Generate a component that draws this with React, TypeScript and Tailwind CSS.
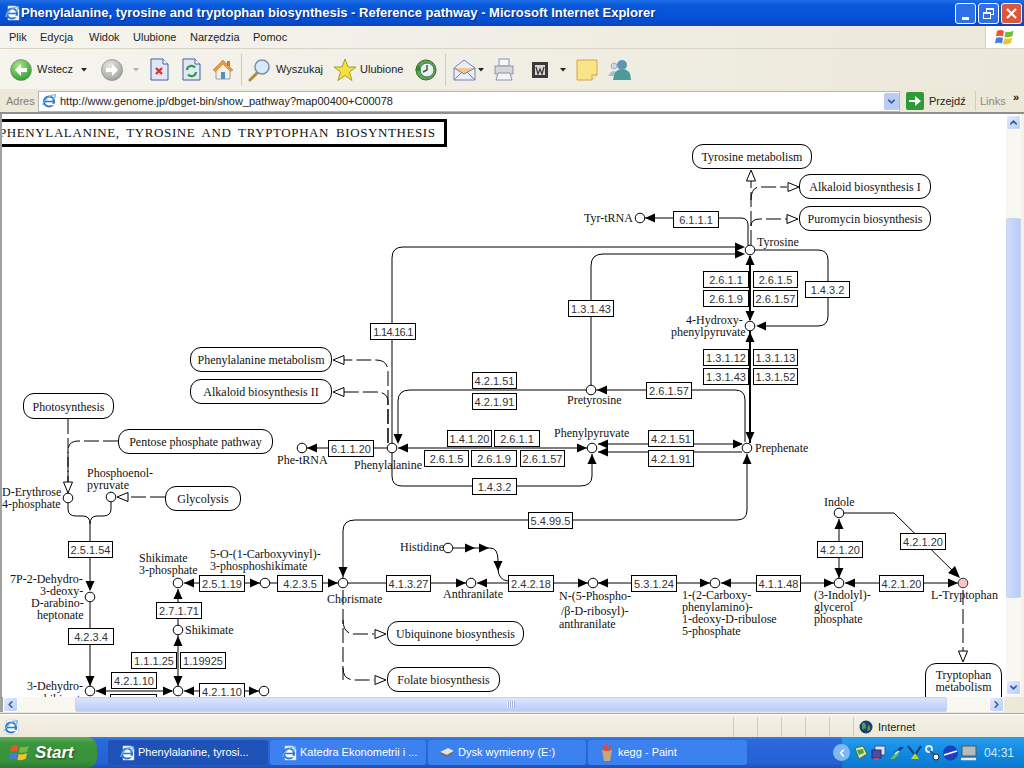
import { ChevronDown, ChevronLeft, ChevronRight, ChevronUp } from "lucide-react";

type Dir = "l" | "r" | "u" | "d";

// everything below is in page coordinates; canvas starts at x=2, y=114
const enzymes: [number, number, number, string][] = [
  [673, 211, 46, "6.1.1.1"],
  [703, 271, 46, "2.6.1.1"],
  [753, 271, 45, "2.6.1.5"],
  [703, 290, 46, "2.6.1.9"],
  [753, 290, 45, "2.6.1.57"],
  [805, 281, 45, "1.4.3.2"],
  [568, 300, 46, "1.3.1.43"],
  [703, 349, 46, "1.3.1.12"],
  [753, 349, 45, "1.3.1.13"],
  [703, 368, 46, "1.3.1.43"],
  [753, 368, 45, "1.3.1.52"],
  [646, 382, 46, "2.6.1.57"],
  [648, 430, 46, "4.2.1.51"],
  [648, 450, 46, "4.2.1.91"],
  [370, 323, 46, "1.14.16.1"],
  [472, 372, 45, "4.2.1.51"],
  [472, 393, 45, "4.2.1.91"],
  [447, 430, 45, "1.4.1.20"],
  [494, 430, 46, "2.6.1.1"],
  [424, 450, 45, "2.6.1.5"],
  [471, 450, 46, "2.6.1.9"],
  [520, 450, 45, "2.6.1.57"],
  [472, 478, 45, "1.4.3.2"],
  [328, 440, 46, "6.1.1.20"],
  [528, 512, 45, "5.4.99.5"],
  [386, 575, 45, "4.1.3.27"],
  [508, 575, 46, "2.4.2.18"],
  [631, 575, 46, "5.3.1.24"],
  [756, 575, 45, "4.1.1.48"],
  [879, 575, 45, "4.2.1.20"],
  [817, 541, 46, "4.2.1.20"],
  [900, 533, 46, "4.2.1.20"],
  [68, 541, 45, "2.5.1.54"],
  [68, 628, 46, "4.2.3.4"],
  [156, 602, 46, "2.7.1.71"],
  [199, 575, 46, "2.5.1.19"],
  [277, 575, 46, "4.2.3.5"],
  [131, 652, 46, "1.1.1.25"],
  [180, 652, 46, "1.19925"],
  [111, 672, 46, "4.2.1.10"],
  [199, 683, 46, "4.2.1.10"],
  [110, 694, 47, ""],
];

const pills: [number, number, number, number, string][] = [
  [692, 144, 120, 25, "Tyrosine metabolism"],
  [799, 174, 132, 25, "Alkaloid biosynthesis I"],
  [799, 206, 132, 25, "Puromycin biosynthesis"],
  [190, 347, 142, 25, "Phenylalanine metabolism"],
  [190, 379, 142, 25, "Alkaloid biosynthesis II"],
  [23, 393, 91, 26, "Photosynthesis"],
  [118, 429, 155, 25, "Pentose phosphate pathway"],
  [165, 486, 76, 25, "Glycolysis"],
  [387, 621, 137, 25, "Ubiquinone biosynthesis"],
  [387, 667, 113, 25, "Folate biosynthesis"],
];

const labels: [number, number, string][] = [
  [584, 218, "Tyr-tRNA"],
  [757, 242, "Tyrosine"],
  [686, 320, "4-Hydroxy-"],
  [671, 332, "phenylpyruvate"],
  [567, 400, "Pretyrosine"],
  [554, 433, "Phenylpyruvate"],
  [755, 448, "Prephenate"],
  [354, 465, "Phenylalanine"],
  [277, 460, "Phe-tRNA"],
  [2, 492, "D-Erythrose"],
  [2, 504, "4-phosphate"],
  [87, 473, "Phosphoenol-"],
  [87, 485, "pyruvate"],
  [10, 579, "7P-2-Dehydro-"],
  [40, 591, "3-deoxy-"],
  [31, 603, "D-arabino-"],
  [37, 615, "heptonate"],
  [27, 686, "3-Dehydro-"],
  [39, 699, "shikimate"],
  [139, 558, "Shikimate"],
  [139, 570, "3-phosphate"],
  [210, 554, "5-O-(1-Carboxyvinyl)-"],
  [210, 566, "3-phosphoshikimate"],
  [185, 630, "Shikimate"],
  [327, 599, "Chorismate"],
  [400, 547, "Histidine"],
  [443, 594, "Anthranilate"],
  [559, 596, "N-(5-Phospho-"],
  [561, 611, "/β-D-ribosyl)-"],
  [559, 624, "anthranilate"],
  [682, 595, "1-(2-Carboxy-"],
  [682, 607, "phenylamino)-"],
  [682, 619, "1-deoxy-D-ribulose"],
  [682, 631, "5-phosphate"],
  [814, 595, "(3-Indolyl)-"],
  [814, 607, "glycerol"],
  [814, 619, "phosphate"],
  [824, 502, "Indole"],
  [931, 595, "L-Tryptophan"],
];

const circles: [number, number][] = [
  [750, 250], [750, 326], [591, 390], [747, 448], [592, 448], [392, 448], [640, 218], [302, 448],
  [68, 498], [111, 497], [90, 597], [90, 691], [178, 583], [265, 583], [343, 583], [178, 630],
  [178, 691], [264, 691], [448, 548], [471, 583], [593, 583], [715, 583], [839, 583], [839, 513],
];

const solid = [
  "M645 218H741Q748 218 748 225V246",
  "M392 444V258Q392 247 403 247H740",
  "M591 386V266Q591 254 603 254H740",
  "M755 250H818Q828 250 828 260V316Q828 326 818 326H760",
  "M596 390H735Q745 390 745 400V442",
  "M598 444H742",
  "M598 452H742",
  "M343 578V531Q343 520 355 520H737Q747 520 747 510V454",
  "M398 448H587",
  "M591 390H410Q398 390 398 401V441",
  "M392 453V476Q392 486 402 486H580Q592 486 592 476V454",
  "M307 448H388",
  "M68 503V509Q68 516 76 516H83Q90 516 90 524V590",
  "M111 502V509Q111 516 103 516H97Q90 516 90 524",
  "M90 602V686",
  "M96 691H172",
  "M178 589V625",
  "M178 635V686",
  "M184 583H260",
  "M270 583H338",
  "M184 691H259",
  "M348 583H466",
  "M477 583H508",
  "M453 548H490Q498 548 498 560V568Q498 580 508 581",
  "M554 583H588",
  "M598 583H710",
  "M721 583H834",
  "M845 583H958",
  "M839 519V578",
  "M844 513H894L958 576",
];

const dashed = [
  "M751 245V180",
  "M751 200Q751 187 760 187H787",
  "M751 226Q751 219 760 219H787",
  "M388 443V372Q388 360 376 360H344",
  "M388 443V402Q388 392 376 392H344",
  "M68 419V482",
  "M118 441H78Q68 441 68 451V482",
  "M165 497H127",
  "M343 590V680",
  "M343 620Q343 634 355 634H374",
  "M343 668Q343 680 355 680H374",
  "M963 590V651",
];

const solidTips: [number, number, Dir][] = [
  [645, 218, "l"], [745, 247, "r"], [745, 254, "r"], [750, 255, "u"], [750, 321, "d"], [756, 326, "l"],
  [750, 332, "u"], [750, 442, "d"], [597, 390, "l"], [598, 444, "l"], [598, 452, "l"], [743, 444, "r"],
  [747, 454, "u"], [343, 577, "d"], [398, 448, "l"], [587, 448, "r"], [398, 444, "d"], [592, 454, "u"],
  [307, 448, "l"], [90, 591, "d"], [90, 686, "d"], [96, 691, "l"], [173, 691, "r"], [178, 636, "u"],
  [178, 686, "d"], [178, 589, "u"], [184, 583, "l"], [260, 583, "r"], [338, 583, "r"], [184, 691, "l"],
  [259, 691, "r"], [466, 583, "r"], [477, 583, "l"], [475, 548, "r"], [489, 548, "r"], [498, 571, "d"],
  [588, 583, "r"], [598, 583, "l"], [710, 583, "r"], [721, 583, "l"], [834, 583, "r"], [845, 583, "l"],
  [958, 583, "r"], [839, 519, "u"], [839, 578, "d"],
];

const openTips: [number, number, Dir][] = [
  [751, 170, "u"], [799, 187, "r"], [798, 219, "r"], [333, 360, "l"], [333, 392, "l"], [68, 493, "d"],
  [117, 497, "l"], [386, 634, "r"], [386, 680, "r"], [963, 662, "d"],
];

function tri(x: number, y: number, d: Dir, len = 10, half = 4.5) {
  if (d === "r") return `${x},${y} ${x - len},${y - half} ${x - len},${y + half}`;
  if (d === "l") return `${x},${y} ${x + len},${y - half} ${x + len},${y + half}`;
  if (d === "u") return `${x},${y} ${x - half},${y + len} ${x + half},${y + len}`;
  return `${x},${y} ${x - half},${y - len} ${x + half},${y - len}`;
}

function Pathway() {
  return (
    <div className="relative w-[1004px] h-[583px] overflow-hidden bg-white">
      <svg width="1004" height="583" viewBox="2 114 1004 583" className="absolute left-0 top-0">
        <g fill="none" stroke="#000" strokeWidth="1">
          {solid.map((d) => (
            <path key={d} d={d} />
          ))}
          <path d="M750 256V320M750 331V443" strokeWidth="2" />
          {dashed.map((d) => (
            <path key={d} d={d} strokeDasharray="15 4" />
          ))}
        </g>
        {solidTips.map(([x, y, d]) => (
          <polygon key={`${x}-${y}-${d}`} points={tri(x, y, d)} fill="#000" />
        ))}
        <polygon points="960,578 948,573 955,566" fill="#000" />
        {openTips.map(([x, y, d]) => (
          <polygon key={`${x}-${y}`} points={tri(x, y, d, 11, 4.5)} fill="#fff" stroke="#000" />
        ))}
        {circles.map(([x, y]) => (
          <circle key={`${x}-${y}`} cx={x} cy={y} r="4.8" fill="#fff" stroke="#000" />
        ))}
        <circle cx="963" cy="583" r="4.8" fill="#f8c4c4" stroke="#333" />
      </svg>

      <div className="absolute left-[-3px] top-[5px] h-[28px] w-[448px] border-[3px] border-black bg-white overflow-hidden">
        <span className="block whitespace-nowrap font-['Liberation_Serif'] text-[13px] leading-[22px] tracking-[0.6px] [word-spacing:3px] text-[#111] ml-[-3px]">
          PHENYLALANINE, TYROSINE AND TRYPTOPHAN BIOSYNTHESIS
        </span>
      </div>

      {pills.map(([x, y, w, h, t]) => (
        <div
          key={t}
          className="absolute flex items-center justify-center rounded-[11px] border border-black bg-white pt-[1px] font-['Liberation_Serif'] text-[12px] text-[#111] whitespace-nowrap"
          style={{ left: x - 2, top: y - 114, width: w, height: h }}
        >
          {t}
        </div>
      ))}
      <div className="absolute left-[923px] top-[549px] w-[77px] h-[46px] rounded-[11px] border border-black bg-white pt-[5px] text-center font-['Liberation_Serif'] text-[12px] leading-[12px] text-[#111]">
        Tryptophan
        <br />
        metabolism
      </div>

      {enzymes.map(([x, y, w, t]) => (
        <div
          key={`${x}-${y}`}
          className={`absolute flex h-[17px] items-center justify-center border border-black bg-white pt-[1px] font-['Liberation_Sans'] text-[11px] text-[#333] whitespace-nowrap ${
            t.length > 8 ? "tracking-[-0.7px]" : ""
          }`}
          style={{ left: x - 2, top: y - 114, width: w }}
        >
          {t}
        </div>
      ))}

      {labels.map(([x, y, t]) => (
        <span
          key={`${x}-${y}`}
          className="absolute whitespace-nowrap font-['Liberation_Serif'] text-[12px] leading-[12px] text-[#111]"
          style={{ left: x - 2, top: y - 114 - 6 }}
        >
          {t}
        </span>
      ))}
    </div>
  );
}

function ScrollBtn({ dir }: { dir: Dir }) {
  const cls = "text-[#3b5a9e]";
  return (
    <div className="flex h-[15px] w-[15px] shrink-0 items-center justify-center rounded-[2px] border border-[#fff] bg-[linear-gradient(135deg,#e3ebfd,#b9ccf6)]">
      {dir === "u" && <ChevronUp size={11} strokeWidth={3.5} className={cls} />}
      {dir === "d" && <ChevronDown size={11} strokeWidth={3.5} className={cls} />}
      {dir === "l" && <ChevronLeft size={11} strokeWidth={3.5} className={cls} />}
      {dir === "r" && <ChevronRight size={11} strokeWidth={3.5} className={cls} />}
    </div>
  );
}

function Caret({ gray }: { gray?: boolean }) {
  return (
    <svg width="6" height="4" viewBox="0 0 6 4" className="shrink-0">
      <path d="M0 0H6L3 3.5Z" fill={gray ? "#b4b4ac" : "#222"} />
    </svg>
  );
}

function Orb({ id, from, to, arrow, left }: { id: string; from: string; to: string; arrow: string; left?: boolean }) {
  return (
    <svg width="22" height="22" viewBox="0 0 22 22" className="shrink-0">
      <defs>
        <radialGradient id={id} cx="40%" cy="30%" r="75%">
          <stop offset="0" stopColor={from} />
          <stop offset="1" stopColor={to} />
        </radialGradient>
      </defs>
      <circle cx="11" cy="11" r="10.5" fill={`url(#${id})`} stroke="#777" strokeWidth="0.6" />
      <path d={left ? "M5 11L11 5V9H17V13H11V17Z" : "M17 11L11 5V9H5V13H11V17Z"} fill={arrow} />
    </svg>
  );
}

function DocIcon({ children }: { children: React.ReactNode }) {
  return (
    <svg width="19" height="23" viewBox="0 0 19 23" className="shrink-0">
      <path d="M1 1H13L18 6V22H1Z" fill="#dfe7f8" stroke="#47609c" />
      <path d="M13 1V6H18" fill="#fff" stroke="#47609c" />
      {children}
    </svg>
  );
}

function IeIcon({ doc }: { doc?: boolean }) {
  return (
    <svg width="16" height="16" viewBox="0 0 16 16" className="shrink-0">
      {doc && <path d="M4 1H12L15 4V15H4Z" fill="#fff" stroke="#b8c4d8" strokeWidth="0.6" />}
      <circle cx="8" cy="8.5" r="5" fill={doc ? "#fff" : "none"} stroke="#2e79c9" strokeWidth="2.2" />
      <path d="M3.5 8.5H12.5" stroke="#2e79c9" strokeWidth="1.6" />
      <path d="M1.5 12C3 7 9 2 14 1.5C15.5 3 13 5 12 6" fill="none" stroke="#6fb2e6" strokeWidth="1.2" />
      <path d="M9 11.5H13" stroke="#fff" strokeWidth="1.4" />
    </svg>
  );
}

function WinFlag({ size = 20 }: { size?: number }) {
  return (
    <svg width={size} height={size} viewBox="0 0 20 20" className="shrink-0">
      <path d="M2 4Q5 2 9 4L8 9.5Q5 8 1 9.5Z" fill="#e8562a" />
      <path d="M10.5 4.5Q14 6 18.5 3.5L17.5 9Q13.5 11 9.5 10Z" fill="#6fbf3c" />
      <path d="M1 11Q4.5 9.5 8 11L7 16.5Q4 15 0 16.5Z" fill="#3c7fe0" />
      <path d="M9.2 11.5Q13 12.5 17.2 10.5L16 16Q12 18 8 17Z" fill="#f4c22c" />
    </svg>
  );
}

function Toolbar() {
  return (
    <div className="flex h-[40px] items-center bg-[linear-gradient(90deg,#f5f4ee,#ece8da)] pl-[10px] pt-[1px] font-['Liberation_Sans'] text-[11px] text-[#222] whitespace-nowrap">
      <Orb id="back" from="#a8e88a" to="#2d9a2a" arrow="#fff" left />
      <span className="ml-[5px] w-[34px]">Wstecz</span>
      <span className="ml-[10px]"><Caret /></span>
      <span className="ml-[14px]"><Orb id="fwd" from="#e8e8e2" to="#a0a09a" arrow="#fff" /></span>
      <span className="ml-[10px]"><Caret gray /></span>
      <span className="ml-[11px]">
        <DocIcon>
          <path d="M6 10L12 16M12 10L6 16" stroke="#d8342a" strokeWidth="2.4" />
        </DocIcon>
      </span>
      <span className="ml-[13px]">
        <DocIcon>
          <path d="M5 12A4.5 4.5 0 0 1 13 9.5M14 14A4.5 4.5 0 0 1 6 16.5" fill="none" stroke="#2f9e3a" strokeWidth="2.2" />
        </DocIcon>
      </span>
      <svg width="22" height="23" viewBox="0 0 22 23" className="ml-[11px] shrink-0">
        <path d="M4 11V21H18V11L11 4Z" fill="#f3f1e6" stroke="#9aa0a8" />
        <path d="M1 12L11 2L21 12L18.5 13.5L11 6L3.5 13.5Z" fill="#ec9a3c" stroke="#b86c20" strokeWidth="0.5" />
        <rect x="9" y="14" width="4" height="7" fill="#4f8fc8" />
        <rect x="15" y="3" width="3" height="5" fill="#c77b3a" />
      </svg>
      <div className="ml-[7px] h-[32px] w-[1px] bg-[#cfccbc]" />
      <svg width="23" height="24" viewBox="0 0 23 24" className="ml-[6px] shrink-0">
        <path d="M10 14L2 22" stroke="#b8863a" strokeWidth="3" strokeLinecap="round" />
        <circle cx="14" cy="9" r="7" fill="#d8eaf8" stroke="#7a94ac" strokeWidth="1.6" />
      </svg>
      <span className="ml-[5px] w-[45px]">Wyszukaj</span>
      <svg width="24" height="24" viewBox="0 0 24 24" className="ml-[12px] shrink-0">
        <path d="M12 1L15 9H23L16.5 14L19 22.5L12 17.5L5 22.5L7.5 14L1 9H9Z" fill="#f6df3c" stroke="#a89a30" />
      </svg>
      <span className="ml-[3px] w-[41px]">Ulubione</span>
      <svg width="24" height="24" viewBox="0 0 24 24" className="ml-[13px] shrink-0">
        <circle cx="12" cy="12" r="10" fill="#5fa845" stroke="#38682c" />
        <circle cx="13" cy="12" r="7" fill="#e8f0f4" stroke="#4a6a8a" />
        <path d="M13 7V12L9 14" fill="none" stroke="#2f5e2a" strokeWidth="1.4" />
        <path d="M1 12L5 7L7 13Z" fill="#2f8a2a" />
      </svg>
      <div className="ml-[7px] h-[32px] w-[1px] bg-[#cfccbc]" />
      <svg width="23" height="22" viewBox="0 0 23 22" className="ml-[7px] shrink-0">
        <path d="M1 9L11 1L22 9V21H1Z" fill="#e9eef8" stroke="#6c86b4" />
        <path d="M1 9L11 15L22 9" fill="#f4c88a" stroke="#6c86b4" />
        <path d="M1 21L9 13M22 21L14 13" stroke="#6c86b4" />
      </svg>
      <span className="ml-[2px]"><Caret /></span>
      <svg width="22" height="23" viewBox="0 0 22 23" className="ml-[9px] shrink-0">
        <path d="M6 1H16V8H6Z" fill="#f4f6fa" stroke="#8c94a4" />
        <path d="M2 8H20V16H2Z" fill="#d4d6dc" stroke="#8c94a4" />
        <path d="M5 15H17L19 22H3Z" fill="#f4f4f4" stroke="#8c94a4" />
      </svg>
      <svg width="16" height="16" viewBox="0 0 16 16" className="ml-[17px] shrink-0">
        <rect width="16" height="16" fill="#3a3a3a" />
        <rect x="3" y="3" width="10" height="10" fill="#d8d8d0" />
        <path d="M4 5L6 12L8 7L10 12L12 5" fill="none" stroke="#333" strokeWidth="1.2" />
      </svg>
      <span className="ml-[12px]"><Caret /></span>
      <svg width="22" height="22" viewBox="0 0 22 22" className="ml-[10px] shrink-0">
        <path d="M1 1H21V16L16 21H1Z" fill="#fbe38a" stroke="#d0a83c" />
        <path d="M16 21V16H21" fill="#f5eeb8" stroke="#d0a83c" />
      </svg>
      <svg width="25" height="23" viewBox="0 0 25 23" className="ml-[9px] shrink-0">
        <circle cx="7" cy="8" r="3" fill="#c8d8e8" stroke="#7a94ac" strokeWidth="0.6" />
        <path d="M1 18Q7 8 12 18Z" fill="#a8c0d4" />
        <circle cx="15" cy="7" r="5" fill="#5f95b0" />
        <path d="M6 22Q7 11 15 11Q24 11 24 22Z" fill="#4e9a98" />
      </svg>
    </div>
  );
}

function AddressBar() {
  return (
    <div className="flex h-[25px] items-center border-b-2 border-[#8f8f8a] bg-[#ece9d8] pt-[1px] font-['Liberation_Sans'] text-[11px] whitespace-nowrap">
      <span className="ml-[6px] w-[32px] text-[#7f7f78]">Adres</span>
      <div className="flex h-[21px] w-[862px] items-center border border-[#aeb8c8] bg-white">
        <span className="ml-[2px]"><IeIcon /></span>
        <span className="ml-[3px] text-[11px] text-[#222]">http://www.genome.jp/dbget-bin/show_pathway?map00400+C00078</span>
        <div className="ml-auto flex h-[17px] w-[15px] items-center justify-center rounded-[2px] bg-[#b9ccf4]">
          <ChevronDown size={11} strokeWidth={3.5} className="text-[#3b5a9e]" />
        </div>
      </div>
      <svg width="18" height="18" viewBox="0 0 18 18" className="ml-[6px] shrink-0">
        <rect width="18" height="18" rx="2" fill="#2f9a38" />
        <path d="M3 8H9V4L15 9L9 14V10H3Z" fill="#fff" />
      </svg>
      <span className="ml-[5px] w-[36px] text-[#222]">Przejdź</span>
      <div className="ml-[10px] h-[20px] w-[1px] bg-[#cfccbc]" />
      <span className="ml-[4px] w-[25px] text-[#8a8a84]">Links</span>
      <span className="ml-[8px] mt-[-8px] font-bold text-[11px] text-[#111]">»</span>
    </div>
  );
}

function TaskButton({ label, w, active, children }: { label: string; w: string; active?: boolean; children: React.ReactNode }) {
  return (
    <div
      className={`flex h-[25px] items-center rounded-[3px] pl-[11px] text-[11px] text-white whitespace-nowrap ${w} ${
        active ? "bg-[#1e52b7]" : "bg-[#3c81f0]"
      }`}
    >
      {children}
      <span className="ml-[3px]">{label}</span>
    </div>
  );
}

function TrayIcons() {
  return (
    <div className="ml-[1px] flex items-center gap-[1px]">
      <svg width="17" height="16" viewBox="0 0 17 16">
        <path d="M3 3L11 1L15 9L7 14Z" fill="#e8dfa0" stroke="#2d7a3a" />
        <path d="M5 5L11 4L12 8L7 10Z" fill="#4aa050" />
      </svg>
      <svg width="17" height="16" viewBox="0 0 17 16">
        <rect x="5" y="1" width="10" height="9" fill="#dfe4f4" stroke="#3f4f8f" />
        <rect x="2" y="5" width="9" height="8" fill="#4a4fa0" stroke="#2a2f70" />
        <path d="M4 14H9" stroke="#c04a7a" strokeWidth="2" />
      </svg>
      <svg width="17" height="16" viewBox="0 0 17 16">
        <path d="M2 14L7 9H11L6 14Z" fill="#6fc04a" />
        <path d="M6 8L12 2H16L10 8Z" fill="#1c3f8f" />
        <path d="M7 9L11 6" stroke="#cfe0f4" strokeWidth="2" />
      </svg>
      <svg width="17" height="16" viewBox="0 0 17 16">
        <path d="M2 1L9 10L15 1" fill="none" stroke="#1a3f6a" strokeWidth="2" />
        <path d="M5 14L13 14L9 8Z" fill="#b4d63a" />
      </svg>
      <svg width="17" height="16" viewBox="0 0 17 16">
        <circle cx="5" cy="4" r="3" fill="none" stroke="#d8ecf8" strokeWidth="2" />
        <path d="M6 6L12 11" stroke="#2a4f8a" strokeWidth="2" />
        <circle cx="12" cy="12" r="3" fill="#f0f4f8" stroke="#223" />
      </svg>
      <svg width="17" height="16" viewBox="0 0 17 16">
        <circle cx="8.5" cy="8" r="7.5" fill="#1c3fc0" />
        <path d="M2 10L15 6" stroke="#fff" strokeWidth="1.6" />
      </svg>
      <svg width="17" height="16" viewBox="0 0 17 16">
        <rect x="2" y="1" width="14" height="10" fill="#b4bcc0" stroke="#555" />
        <path d="M1 14H16" stroke="#e4e8ea" strokeWidth="2.5" />
      </svg>
    </div>
  );
}

export default function App() {
  return (
    <div className="flex h-[768px] w-[1024px] flex-col overflow-hidden bg-[#ece9d8] font-['Liberation_Sans']">
      <div className="flex h-[26px] shrink-0 items-center bg-[linear-gradient(180deg,#1f6fe8_0%,#0a58dc_20%,#0550d8_70%,#0a46bc_100%)] pr-[2px]">
        <span className="ml-[4px]"><IeIcon doc /></span>
        <span className="ml-[1px] text-[13px] font-bold text-white whitespace-nowrap [text-shadow:1px_1px_1px_#0a2a80]">
          Phenylalanine, tyrosine and tryptophan biosynthesis - Reference pathway - Microsoft Internet Explorer
        </span>
        <div className="ml-auto flex gap-[2px]">
          <div className="flex h-[21px] w-[21px] items-end justify-center rounded-[3px] border border-white bg-[#2f6fe8] pb-[3px]">
            <div className="h-[3px] w-[7px] bg-white" />
          </div>
          <div className="relative h-[21px] w-[21px] rounded-[3px] border border-white bg-[#2f6fe8]">
            <div className="absolute left-[7px] top-[4px] h-[7px] w-[8px] border border-t-2 border-white" />
            <div className="absolute left-[4px] top-[8px] h-[7px] w-[8px] border border-t-2 border-white bg-[#2f6fe8]" />
          </div>
          <div className="flex h-[21px] w-[21px] items-center justify-center rounded-[3px] border border-white bg-[#d9573a]">
            <svg width="13" height="13" viewBox="0 0 13 13">
              <path d="M2 2L11 11M11 2L2 11" stroke="#fff" strokeWidth="2.2" />
            </svg>
          </div>
        </div>
      </div>

      <div className="flex h-[22px] shrink-0 bg-[linear-gradient(90deg,#f5f4ee,#ece8da)] text-[11px] text-[#222]">
        <div className="flex items-center pl-[9px]">
          <span className="w-[31px]">Plik</span>
          <span className="w-[49px]">Edycja</span>
          <span className="w-[44px]">Widok</span>
          <span className="w-[57px]">Ulubione</span>
          <span className="w-[63px]">Narzędzia</span>
          <span>Pomoc</span>
        </div>
        <div className="ml-auto flex w-[39px] items-center justify-center border-l border-[#d4d0c0] bg-white">
          <WinFlag />
        </div>
      </div>
      <div className="h-[1px] shrink-0 bg-[#d8d4c4]" />

      <Toolbar />
      <AddressBar />

      <div className="flex h-[583px] shrink-0">
        <div className="w-[2px] bg-[#a0a09a]" />
        <Pathway />
        <div className="flex w-[15px] shrink-0 flex-col bg-[#f8f7f1] pt-[1px]">
          <ScrollBtn dir="u" />
          <div className="h-[88px] shrink-0" />
          <div className="h-[380px] shrink-0 rounded-[2px] border border-[#c8d4f0] bg-[linear-gradient(90deg,#cfdcfb,#b9ccf8)]" />
          <div className="flex-1" />
          <ScrollBtn dir="d" />
          <div className="h-[2px] shrink-0" />
        </div>
        <div className="w-[3px] bg-[#f4f2e8]" />
      </div>

      <div className="flex h-[15px] shrink-0 bg-[#f8f7f1]">
        <div className="w-[3px] bg-[#a0a09a]" />
        <ScrollBtn dir="l" />
        <div className="w-[57px] shrink-0" />
        <div className="flex w-[872px] shrink-0 items-center justify-center rounded-[2px] border border-[#c8d4f0] bg-[linear-gradient(180deg,#dbe5fc,#b9ccf8)]">
          <div className="h-[7px] w-[8px] bg-[repeating-linear-gradient(90deg,#eef3fe_0,#eef3fe_1px,#9db4e4_1px,#9db4e4_2px)]" />
        </div>
        <div className="w-[42px] shrink-0" />
        <ScrollBtn dir="r" />
        <div className="flex-1 bg-[#ece9d8]" />
      </div>

      <div className="h-[1px] shrink-0 bg-[#ece9d8]" />
      <div className="h-[1px] shrink-0 bg-[#a8a89e]" />
      <div className="h-[1px] shrink-0 bg-[#fff]" />
      <div className="flex h-[22px] shrink-0 items-center bg-[linear-gradient(180deg,#f4f2e8,#ece9d8)] pt-[2px] text-[11px] text-[#222]">
        <span className="ml-[3px]"><IeIcon doc /></span>
        <div className="ml-auto flex h-full">
          {[0, 1, 2, 3, 4].map((i) => (
            <div key={i} className="h-full w-[24px] border-l border-[#d0ccba]" />
          ))}
          <div className="flex h-full w-[171px] items-center border-l border-[#d0ccba] pl-[5px]">
            <svg width="14" height="14" viewBox="0 0 14 14" className="shrink-0">
              <circle cx="7" cy="7" r="6.5" fill="#1c3f6e" />
              <path d="M3 3Q7 2 7 6T3 9ZM9 5Q12 6 11 10L8 11Z" fill="#4c9a5c" />
            </svg>
            <span className="ml-[5px]">Internet</span>
          </div>
        </div>
      </div>

      <div className="flex h-[31px] shrink-0 items-center bg-[linear-gradient(180deg,#3a7fe8_0%,#2a69dc_10%,#2560d4_85%,#1c4fb8_100%)]">
        <div className="flex h-full w-[97px] shrink-0 items-center rounded-r-[10px] bg-[linear-gradient(180deg,#5fae5c_0%,#3c963e_20%,#37903a_80%,#2a7a30_100%)] pl-[9px]">
          <WinFlag size={21} />
          <span className="ml-[5px] text-[17px] font-bold italic text-white [text-shadow:1px_1px_2px_#1a4a1a]">Start</span>
        </div>
        <div className="ml-[11px] flex gap-[2px]">
          <TaskButton label="Phenylalanine, tyrosi..." w="w-[160px]" active>
            <IeIcon doc />
          </TaskButton>
          <TaskButton label="Katedra Ekonometrii i ..." w="w-[156px]">
            <IeIcon doc />
          </TaskButton>
          <TaskButton label="Dysk wymienny (E:)" w="w-[158px]">
            <svg width="16" height="12" viewBox="0 0 16 12" className="shrink-0">
              <path d="M1 5L9 1L15 4L8 8Z" fill="#e4e4dc" />
              <path d="M1 5L8 8L15 4V6L8 10L1 7Z" fill="#6f6f6f" />
            </svg>
          </TaskButton>
          <TaskButton label="kegg - Paint" w="w-[159px]">
            <svg width="16" height="18" viewBox="0 0 16 18" className="shrink-0">
              <path d="M3 6H13L11 17H5Z" fill="#c8a878" />
              <path d="M4 1L6 7M8 0V7M12 1L10 7" stroke="#e04a3a" strokeWidth="2" />
            </svg>
          </TaskButton>
        </div>
        <div className="relative ml-auto flex h-full w-[182px] items-center bg-[linear-gradient(180deg,#2a9cf0,#0f8ae0_50%,#0b78d0)] pl-[9px]">
          <div className="absolute left-[-9px] flex h-[17px] w-[17px] items-center justify-center rounded-full bg-[#7fb8f0]">
            <ChevronLeft size={12} strokeWidth={3} className="text-white" />
          </div>
          <TrayIcons />
          <span className="ml-[7px] text-[12px] text-[#d6e8fb]">04:31</span>
        </div>
      </div>
    </div>
  );
}
